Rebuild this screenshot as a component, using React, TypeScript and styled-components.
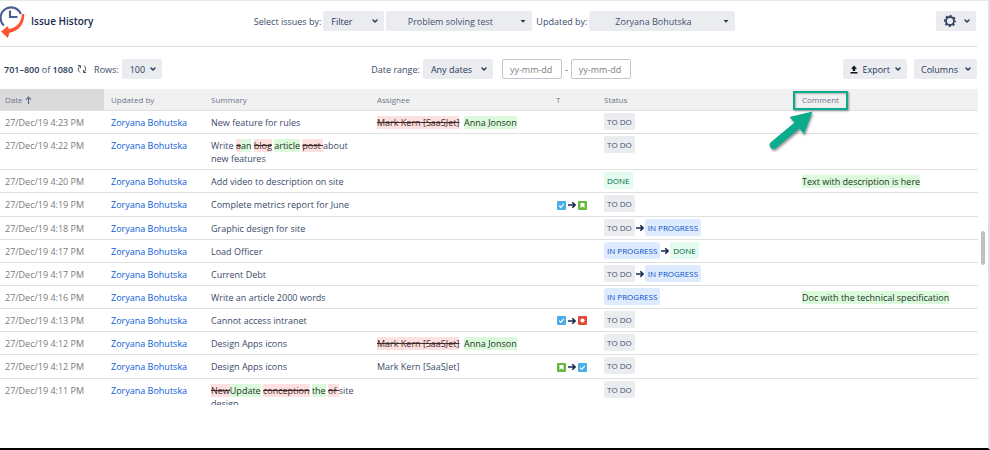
import React from "react";
import styled, { createGlobalStyle, css } from "styled-components";

const GlobalStyle = createGlobalStyle`
  * { box-sizing: border-box; }
  body {
    margin: 0;
    background: #fff;
    color: #3b4a69;
    font: 9px/13px "Open Sans", "Noto Sans", sans-serif;
  }
  button, select, input { font: inherit; color: inherit; margin: 0; }
`;

const Page = styled.div`
  position: relative;
  display: flex;
  flex-direction: column;
  height: 100vh;
  padding-right: 10px;
  border-top: 1px solid #e8e8e8;
  border-right: 2px solid #dedede;
  border-bottom: 2px solid #000;
  overflow: hidden;
`;

const ScrollThumb = styled.div`
  position: absolute;
  top: 230px;
  right: 3px;
  width: 4px;
  height: 34px;
  border-radius: 2px;
  background: #c1c1c1;
`;

const Bar = styled.header`
  display: flex;
  flex: none;
  height: 46px;
  margin-right: 1px;
  padding: 10px 1px 15px 0;
  border-bottom: 1px solid #dcdcdc;
`;

const Toolbar = styled.div`
  display: flex;
  flex: none;
  align-items: center;
  height: 42px;
  padding: 2px 1px 0 0;
`;

const Lead = styled.div<{ $share: string }>`
  display: flex;
  flex: none;
  align-items: center;
  width: ${(p) => p.$share};
`;

const Title = styled.h1`
  margin: 0 0 0 6px;
  font-size: 10px;
  font-weight: 600;
  color: #172b4d;
`;

const Controls = styled.div<{ $gap?: number }>`
  display: flex;
  align-items: center;
  gap: ${(p) => p.$gap ?? 3}px;
`;

const Actions = styled(Controls)`
  margin-left: auto;
`;

const Label = styled.label<{ $before?: number }>`
  margin-left: ${(p) => p.$before ?? 0}px;
  white-space: nowrap;
`;

const Count = styled.span`
  margin: 0 4px;
  b { font-weight: 600; color: #253858; }
`;

const control = css`
  height: 20px;
  border: 0;
  border-radius: 2px;
  background: #ebecf0;
`;

const SelectBox = styled.div<{ $width: number }>`
  position: relative;
  display: flex;
  flex: none;
  width: ${(p) => p.$width}px;
  svg {
    position: absolute;
    top: 7px;
    right: 5px;
    pointer-events: none;
  }
`;

const Select = styled.select<{ $centered?: boolean }>`
  ${control}
  width: 100%;
  padding: 0 12px 0 8px;
  appearance: none;
  font-weight: 500;
  color: #253858;
  ${(p) =>
    p.$centered &&
    css`
      padding: 0 18px 0 0;
      text-align-last: center;
      font-weight: 400;
      color: #42526e;
    `}
`;

const Button = styled.button<{ $gap?: number }>`
  ${control}
  display: flex;
  align-items: center;
  gap: ${(p) => p.$gap ?? 4}px;
  padding: 0 5px 0 7px;
  font-weight: 500;
  color: #253858;
`;

const RefreshButton = styled.button`
  display: flex;
  padding: 0;
  margin-right: 7px;
  border: 0;
  background: none;
`;

const DateInput = styled.input`
  width: 60px;
  height: 20px;
  padding: 0 7px;
  border: 1px solid #c1c7d0;
  border-radius: 2px;
  background: #fff;
  &::placeholder { color: #808080; opacity: 1; }
`;

const TableArea = styled.main`
  flex: 1;
  min-height: 0;
  margin-bottom: 43px;
  overflow: hidden;
`;

const Table = styled.table`
  width: 100%;
  table-layout: fixed;
  border-collapse: separate;
  border-spacing: 0;
`;

const Col = styled.col<{ $width?: number }>`
  width: ${(p) => (p.$width ? p.$width + "px" : "auto")};
`;

const Th = styled.th<{ $sorted?: boolean }>`
  position: relative;
  height: 22px;
  padding: 0 7px;
  border-bottom: 1px solid #dfe1e6;
  background: ${(p) => (p.$sorted ? "#dadada" : "#f1f1f1")};
  color: #6b778c;
  font-size: 8px;
  font-weight: 500;
  text-align: left;
  &:first-child { padding-left: 5px; }
  > svg { vertical-align: -1px; }
`;

const Td = styled.td`
  padding: 5px 7px 4px;
  border-bottom: 1px solid #e0e0e0;
  vertical-align: top;
  &:first-child { padding-left: 5px; color: #7a7a7a; }
`;

const TypeTd = styled(Td)`
  padding: 5px 10px 0 0;
`;

const StatusTd = styled(Td)`
  padding: 2px 7px 3px;
`;

const TypeChange = styled.div<{ $tall: boolean }>`
  display: flex;
  align-items: center;
  justify-content: flex-end;
  gap: 2px;
  height: ${(p) => (p.$tall ? 18 : 17)}px;
  padding-bottom: 4px;
`;

const StatusChange = styled.div`
  display: flex;
  align-items: center;
  gap: 1px;
`;

const tones = {
  "TO DO": ["#ebecf0", "#42526e"],
  "IN PROGRESS": ["#deebff", "#0b50c8"],
  DONE: ["#e3fcef", "#006644"],
};
type StatusName = keyof typeof tones;

const Badge = styled.span<{ $tone: StatusName }>`
  padding: 0 3px;
  border-radius: 2px;
  background: ${(p) => tones[p.$tone][0]};
  color: ${(p) => tones[p.$tone][1]};
  font-size: 8px;
  font-weight: 500;
  line-height: 17px;
  white-space: nowrap;
`;

const UserLink = styled.a`
  color: #0b5cd9;
  text-decoration: none;
`;

const Added = styled.ins`
  background: #dbfadb;
  color: #253328;
  text-decoration: none;
`;

const Removed = styled.del`
  background: #fde1e1;
  color: #402a2a;
`;

const Highlight = styled.span`
  position: absolute;
  top: 2px;
  left: -2px;
  width: 55px;
  height: 19px;
  border: 2px solid #0cab8c;
  box-shadow: 1px 1px 2px #0006, inset 1px 1px 2px #0004;
`;

const Pointer = styled.svg`
  position: absolute;
  top: 20px;
  left: -30px;
`;

const Chevron = () => (
  <svg width="8" height="6" viewBox="0 0 8 6" fill="none" stroke="#253858" strokeWidth="1.5" strokeLinecap="round" strokeLinejoin="round">
    <path d="M2 2l2 2 2-2" />
  </svg>
);

const Caret = () => (
  <svg width="8" height="6" viewBox="0 0 8 6" fill="#253858">
    <path d="M1.5 2h5L4 4.7z" />
  </svg>
);

const Logo = () => (
  <svg width="25" height="35" viewBox="0 0 25 35" fill="none">
    <path d="M3.800 21.500A10.500 10.500 0 1 1 20.800 10" stroke="#4c6190" strokeWidth="2.200" />
    <path d="M10 6.500v6.500h7.500" stroke="#4c6190" strokeWidth="2.200" />
    <path d="M21.800 10h2.400c.4 9-4.200 16.500-14.700 18.800L7.800 34 1 27.500l7-5.500.5 3C16 24 21.500 19 21.800 10z" fill="#ff5630" />
  </svg>
);

const Gear = () => (
  <svg width="14" height="14" viewBox="0 0 14 14" fill="none" stroke="#344563">
    <circle cx="7" cy="7" r="4" strokeWidth="1.8" />
    <circle cx="7" cy="7" r="5.300" strokeWidth="1.600" strokeDasharray="2.080 2.080" strokeDashoffset="1" />
  </svg>
);

const Download = () => (
  <svg width="8" height="9" viewBox="0 0 8 9" fill="#111">
    <path d="M4 .5L7 3.700H5.200V6H2.800V3.700H1zM.5 7h7v1.500h-7z" />
  </svg>
);

const Refresh = () => (
  <svg width="10" height="10" viewBox="0 0 10 10" fill="none" stroke="#555">
    <path d="M1 1.500h2.500V4M3.300 1.800C.8 3.500.8 6.500 3 8.500M9 8.500H6.500V6M6.700 8.200C9.200 6.500 9.200 3.500 7 1.500" />
  </svg>
);

const SortUp = () => (
  <svg width="7" height="8" viewBox="0 0 7 8" fill="none" stroke="#5e6c84" strokeWidth="1.200">
    <path d="M3.500 8V1.200M1 3.700l2.500-2.500L6 3.700" />
  </svg>
);

const ArrowRight = () => (
  <svg width="8" height="8" viewBox="0 0 8 8" fill="none" stroke="#172b4d" strokeWidth="1.600">
    <path d="M0 4h7M4.300 1.300L7 4 4.300 6.700" />
  </svg>
);

type IssueType = "task" | "story" | "bug";

const TypeIcon = ({ type }: { type: IssueType }) => (
  <svg width="9" height="9" viewBox="0 0 9 9" role="img" aria-label={type}>
    <rect width="9" height="9" rx="1" fill={{ task: "#4bade8", story: "#63ba3c", bug: "#e5493a" }[type]} />
    {type === "task" && <path d="M2.200 4.700l1.600 1.600 3-3.500" fill="none" stroke="#fff" strokeWidth="1.200" />}
    {type === "story" && <path d="M2.500 2h4v5.200l-2-1.900-2 1.900z" fill="#fff" />}
    {type === "bug" && <circle cx="4.500" cy="4.500" r="2" fill="#fff" />}
  </svg>
);

type Row = {
  time: string;
  summary: React.ReactNode;
  assignee?: React.ReactNode;
  types?: IssueType[];
  status: StatusName[];
  comment?: string;
};

const reassigned = (
  <>
    <Removed>Mark Kern [SaaSJet]</Removed>&nbsp; <Added>Anna Jonson</Added>
  </>
);

const rows: Row[] = [
  { time: "4:23", summary: "New feature for rules", assignee: reassigned, status: ["TO DO"] },
  {
    time: "4:22",
    summary: (
      <>
        Write <Removed>a</Removed><Added>an</Added> <Removed>blog</Removed> <Added>article</Added>{" "}
        <Removed>post </Removed>about new features
      </>
    ),
    status: ["TO DO"],
  },
  { time: "4:20", summary: "Add video to description on site", status: ["DONE"], comment: "Text with description is here" },
  { time: "4:19", summary: "Complete metrics report for June", types: ["task", "story"], status: ["TO DO"] },
  { time: "4:18", summary: "Graphic design for site", status: ["TO DO", "IN PROGRESS"] },
  { time: "4:17", summary: "Load Officer", status: ["IN PROGRESS", "DONE"] },
  { time: "4:17", summary: "Current Debt", status: ["TO DO", "IN PROGRESS"] },
  { time: "4:16", summary: "Write an article 2000 words", status: ["IN PROGRESS"], comment: "Doc with the technical specification" },
  { time: "4:13", summary: "Cannot access intranet", types: ["task", "bug"], status: ["TO DO"] },
  { time: "4:12", summary: "Design Apps icons", assignee: reassigned, status: ["TO DO"] },
  { time: "4:12", summary: "Design Apps icons", assignee: "Mark Kern [SaaSJet]", types: ["story", "task"], status: ["TO DO"] },
  {
    time: "4:11",
    summary: (
      <>
        <Removed>New</Removed><Added>Update</Added> <Removed>conception</Removed> <Added>the</Added>{" "}
        <Removed>of </Removed>site design
      </>
    ),
    status: ["TO DO"],
  },
];

function Dropdown({ id, value, width, centered, label }: { id: string; value: string; width: number; centered?: boolean; label?: string }) {
  return (
    <SelectBox $width={width}>
      <Select id={id} $centered={centered} aria-label={label}>
        <option>{value}</option>
      </Select>
      {centered ? <Caret /> : <Chevron />}
    </SelectBox>
  );
}

function HistoryRow({ row }: { row: Row }) {
  return (
    <tr>
      <Td>27/Dec/19 {row.time} PM</Td>
      <Td><UserLink href="#user">Zoryana Bohutska</UserLink></Td>
      <Td>{row.summary}</Td>
      <Td>{row.assignee}</Td>
      <TypeTd>
        {row.types && (
          <TypeChange $tall={row.types.includes("story")}>
            <TypeIcon type={row.types[0]} />
            <ArrowRight />
            <TypeIcon type={row.types[1]} />
          </TypeChange>
        )}
      </TypeTd>
      <StatusTd>
        <StatusChange>
          {row.status.map((name, i) => (
            <React.Fragment key={name}>
              {i > 0 && <ArrowRight />}
              <Badge $tone={name}>{name}</Badge>
            </React.Fragment>
          ))}
        </StatusChange>
      </StatusTd>
      <Td>{row.comment && <Added>{row.comment}</Added>}</Td>
    </tr>
  );
}

export default function App() {
  return (
    <>
      <GlobalStyle />
      <Page>
        <Bar>
          <Lead $share="26%">
            <Logo />
            <Title>Issue History</Title>
          </Lead>
          <Controls $gap={2}>
            <Label htmlFor="source">Select issues by:</Label>
            <Dropdown id="source" value="Filter" width={61} />
            <Dropdown id="filter" value="Problem solving test" width={146} centered label="Filter" />
            <Label htmlFor="user" $before={2}>Updated by:</Label>
            <Dropdown id="user" value="Zoryana Bohutska" width={146} centered />
          </Controls>
          <Actions>
            <Button aria-label="Settings" $gap={6}><Gear /><Chevron /></Button>
          </Actions>
        </Bar>
        <Toolbar>
          <Lead $share="38%">
            <Count><b>701–800</b> of <b>1080</b></Count>
            <RefreshButton aria-label="Refresh"><Refresh /></RefreshButton>
            <Controls>
              <Label htmlFor="rows">Rows:</Label>
              <Dropdown id="rows" value="100" width={40} />
            </Controls>
          </Lead>
          <Controls>
            <Label htmlFor="range">Date range:</Label>
            <Dropdown id="range" value="Any dates" width={70} />
            <Label $before={6}><DateInput placeholder="yy-mm-dd" aria-label="From" /></Label>
            <span>-</span>
            <DateInput placeholder="yy-mm-dd" aria-label="To" />
          </Controls>
          <Actions $gap={7}>
            <Button><Download />Export<Chevron /></Button>
            <Button $gap={6}>Columns<Chevron /></Button>
          </Actions>
        </Toolbar>
        <TableArea>
          <Table>
            <colgroup>
              <Col $width={104} />
              <Col $width={100} />
              <Col $width={166} />
              <Col $width={179} />
              <Col $width={48} />
              <Col $width={198} />
              <Col />
            </colgroup>
            <thead>
              <tr>
                <Th $sorted>Date <SortUp /></Th>
                <Th>Updated by</Th>
                <Th>Summary</Th>
                <Th>Assignee</Th>
                <Th>T</Th>
                <Th>Status</Th>
                <Th>
                  Comment
                  <Highlight />
                  <Pointer width="55" height="45" viewBox="0 0 55 45">
                    <path d="M47.500 2.500L39 25l-4.500-5.500L10.500 39.500a4 4 0 0 1-5-6L29.500 13.500 24.500 8z" fill="#0cab8c" filter="drop-shadow(1px 2px 1px #0006)" />
                  </Pointer>
                </Th>
              </tr>
            </thead>
            <tbody>
              {rows.map((row, i) => <HistoryRow key={i} row={row} />)}
            </tbody>
          </Table>
        </TableArea>
        <ScrollThumb />
      </Page>
    </>
  );
}
